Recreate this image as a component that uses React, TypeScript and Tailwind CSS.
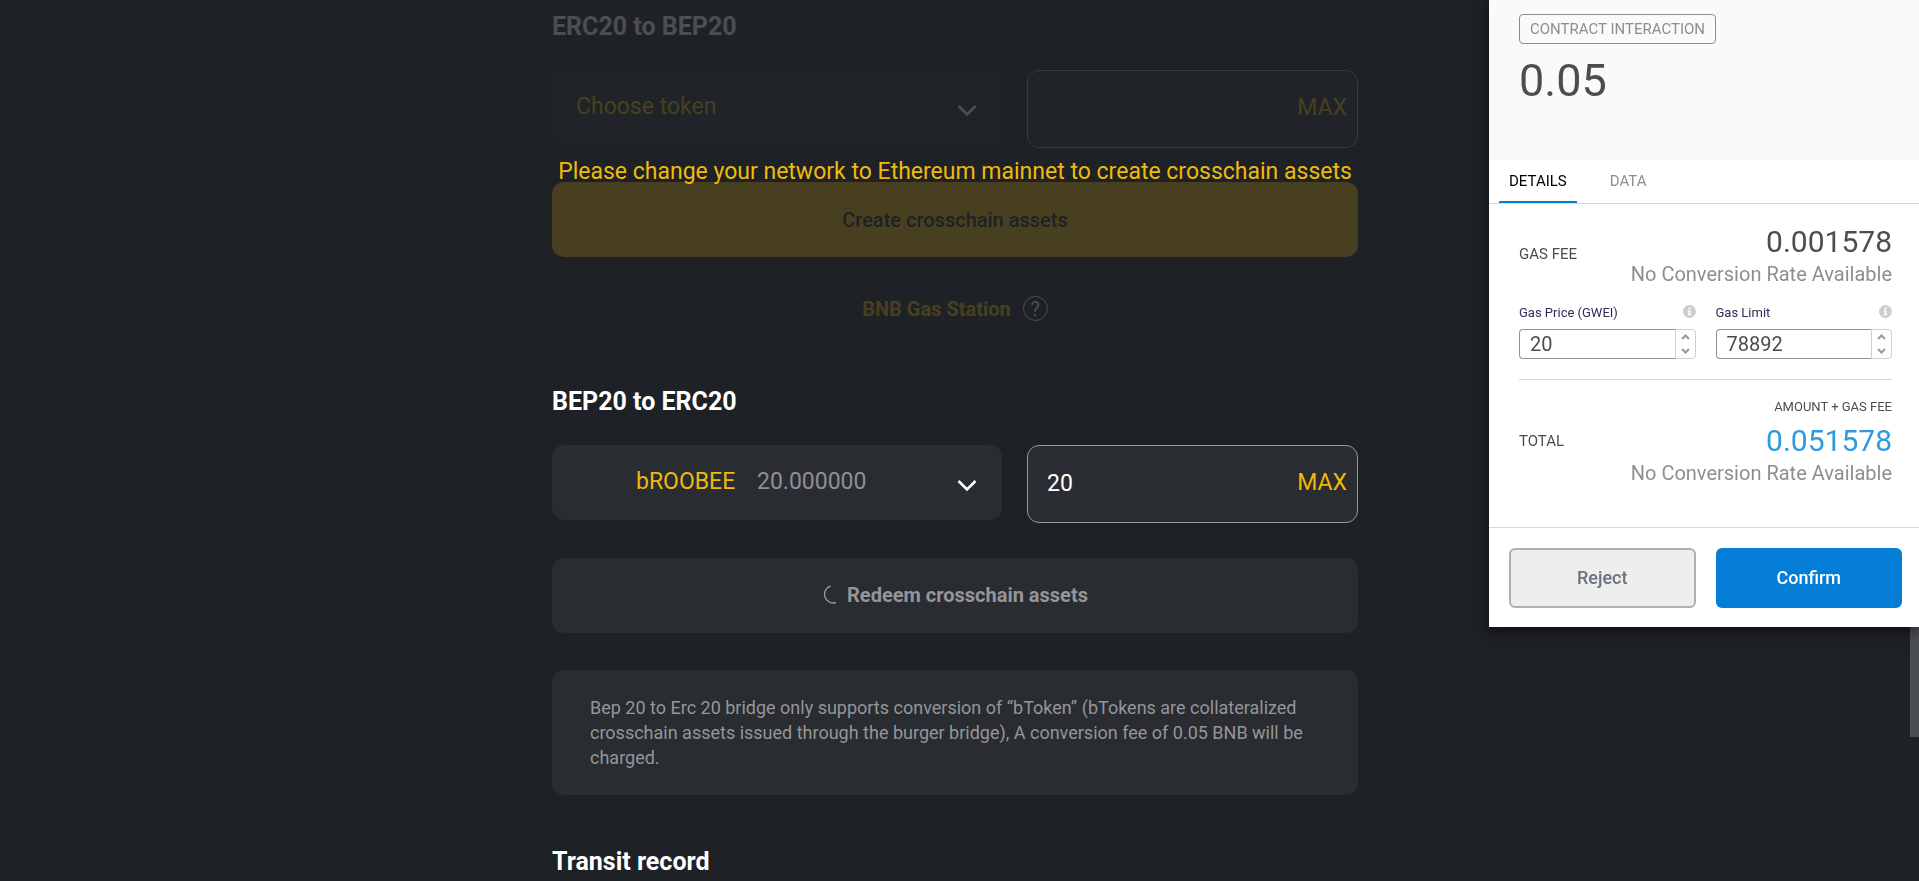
import { useState } from 'react'

interface TokenSelectProps {
  id: string
  label: string
  options: string[]
  balance?: string
}

// the balance and the chevron lie over the select and let clicks through
function TokenSelect({ id, label, options, balance }: TokenSelectProps) {
  return (
    <div className="relative h-[75px] w-[450px] rounded-xl bg-[#292c31] text-[23px] leading-6">
      <select
        id={id}
        aria-label={label}
        className={`h-full w-full cursor-pointer appearance-none bg-transparent pb-0.5 text-[#f0b90b] outline-none ${
          balance ? 'pl-[84px]' : 'pl-6'
        }`}
      >
        {options.map((option) => (
          <option key={option}>{option}</option>
        ))}
      </select>
      {balance && (
        <span className="pointer-events-none absolute inset-y-0 left-[205px] flex items-center pb-0.5 text-[#8e9093]">
          {balance}
        </span>
      )}
      <span className="pointer-events-none absolute inset-y-0 right-[25px] flex items-center pt-1.5">
        <svg width="20" height="13" viewBox="0 0 20 13" fill="none">
          <path d="M1.5 2 L10 10.5 L18.5 2" stroke="white" strokeWidth="2.6" />
        </svg>
      </span>
    </div>
  )
}

interface AmountInputProps {
  id: string
  label: string
  value: string
  onChange: (value: string) => void
  onMax: () => void
}

function AmountInput({ id, label, value, onChange, onMax }: AmountInputProps) {
  return (
    <div className="flex h-[78px] min-w-0 flex-1 items-center rounded-xl border border-[#96999c] bg-[#292c31] pr-2.5 pb-0.5 pl-[19px] text-[23px] leading-6">
      <input
        id={id}
        aria-label={label}
        value={value}
        onChange={(e) => onChange(e.target.value)}
        className="h-full min-w-0 flex-1 bg-transparent text-white outline-none"
      />
      <button onClick={onMax} className="text-[#f0b90b]">MAX</button>
    </div>
  )
}

function InfoIcon() {
  return (
    <svg width="13" height="13" viewBox="0 0 13 13">
      <circle cx="6.5" cy="6.5" r="6.5" fill="#cdcdcd" />
      <path d="M5.5 2.5h2v1.8h-2z M4.8 5.3h2.7v3.8h.8v1.2H4.8V9.1h.8V6.5h-.8z" fill="white" />
    </svg>
  )
}

interface GasFieldProps {
  id: string
  label: string
  value: number
  onChange: (value: number) => void
}

function GasField({ id, label, value, onChange }: GasFieldProps) {
  return (
    <div className="min-w-0">
      <div className="flex h-4 items-start justify-between">
        <label htmlFor={id} className="text-[13px] leading-4 text-[#2b2f55]">{label}</label>
        <InfoIcon />
      </div>
      <div className="mt-2 flex h-[30px]">
        <input
          id={id}
          inputMode="numeric"
          value={value}
          onChange={(e) => onChange(Number(e.target.value) || 0)}
          className="min-w-0 flex-1 rounded-l border border-r-0 border-[#8f9295] bg-white pl-2.5 text-xl leading-6 text-[#4d4d4d] outline-none"
        />
        <div className="flex w-[21px] flex-col rounded-r border border-[#cfcfcf] text-[#9b9b9b]">
          <button aria-label={`Increase ${label}`} onClick={() => onChange(value + 1)} className="flex flex-1 items-center justify-center">
            <svg width="9" height="6" viewBox="0 0 9 6" fill="none">
              <path d="M1 5 L4.5 1.5 L8 5" stroke="currentColor" strokeWidth="2.2" />
            </svg>
          </button>
          <button aria-label={`Decrease ${label}`} onClick={() => onChange(Math.max(0, value - 1))} className="flex flex-1 items-center justify-center">
            <svg width="9" height="6" viewBox="0 0 9 6" fill="none">
              <path d="M1 1 L4.5 4.5 L8 1" stroke="currentColor" strokeWidth="2.2" />
            </svg>
          </button>
        </div>
      </div>
    </div>
  )
}

function WalletPopup() {
  const [tab, setTab] = useState('Details')
  const [gasPrice, setGasPrice] = useState(20)
  const [gasLimit, setGasLimit] = useState(78892)

  return (
    <aside className="fixed top-0 right-0 z-10 w-[430px] bg-white text-[#4d4d4d] shadow-[0_4px_14px_rgba(0,0,0,0.6)]">
      <header className="h-40 bg-[#f9fafa] pt-3.5 pl-[30px]">
        <div className="inline-flex h-[30px] items-center rounded border border-[#8c8e94] px-2.5 text-[15px] leading-5 text-[#8c8e94] uppercase">
          Contract interaction
        </div>
        <div className="mt-[11px] text-[45px] leading-[52px]">0.05</div>
      </header>

      <nav className="flex h-11 gap-[23px] border-b border-[#d2d8dd] pl-2.5">
        {['Details', 'Data'].map((name) => (
          <button
            key={name}
            onClick={() => setTab(name)}
            className={`border-b-2 px-2.5 text-[15px] leading-5 uppercase ${
              tab === name ? 'border-[#037dd6] text-black' : 'border-transparent text-[#8c8e94]'
            }`}
          >
            {name}
          </button>
        ))}
      </nav>

      <div className="pr-[27px] pl-[30px]">
        <div className="flex items-start justify-between pt-5">
          <span className="pt-5 text-[15px] leading-5 uppercase">Gas fee</span>
          <div className="text-right">
            <div className="text-[30px] leading-9">0.001578</div>
            <div className="text-xl leading-7 text-[#8c8e94]">No Conversion Rate Available</div>
          </div>
        </div>

        <div className="mt-[17px] grid grid-cols-2 gap-5">
          <GasField id="gas-price" label="Gas Price (GWEI)" value={gasPrice} onChange={setGasPrice} />
          <GasField id="gas-limit" label="Gas Limit" value={gasLimit} onChange={setGasLimit} />
        </div>

        <div className="mt-5 border-t border-[#d6d9dc] pt-[19px] text-right text-[13px] leading-4 uppercase">
          Amount + gas fee
        </div>
        <div className="mt-2 flex items-start justify-between">
          <span className="text-[15px] leading-9 uppercase">Total</span>
          <div className="text-right">
            <div className="text-[30px] leading-9 text-[#2f9ae0]">0.051578</div>
            <div className="text-xl leading-7 text-[#8c8e94]">No Conversion Rate Available</div>
          </div>
        </div>
      </div>

      <footer className="mt-10 grid grid-cols-2 gap-5 border-t border-[#d6d9dc] pt-5 pr-[17px] pb-[19px] pl-5 text-lg leading-6 font-medium">
        <button className="h-[60px] rounded-md border-2 border-[#b0b0b0] bg-[#eeeeee] text-[#6a737d]">Reject</button>
        <button className="h-[60px] rounded-md bg-[#037dd6] text-white">Confirm</button>
      </footer>
    </aside>
  )
}

export default function App() {
  const [createAmount, setCreateAmount] = useState('')
  const [redeemAmount, setRedeemAmount] = useState('20')

  return (
    <div className="flex h-screen overflow-hidden bg-[#1e2126] font-[Roboto,sans-serif] text-white">
      <main className="min-w-0 flex-1">
        <div className="mx-auto w-full max-w-[806px] pt-[13px]">
          <section>
            <div className="opacity-20">
              <h2 className="text-[25px] leading-7 font-bold">ERC20 to BEP20</h2>
              <div className="mt-[29px] flex items-start gap-[25px]">
                <TokenSelect id="create-token" label="Token to create" options={['Choose token']} />
                <AmountInput
                  id="create-amount"
                  label="Amount to create"
                  value={createAmount}
                  onChange={setCreateAmount}
                  onMax={() => setCreateAmount('0')}
                />
              </div>
            </div>
            <p className="relative z-[1] pt-3 text-center text-[23px] leading-6 text-[#f0b90b]">
              Please change your network to Ethereum mainnet to create crosschain assets
            </p>
            <div className="-mt-0.5 opacity-20">
              <button className="h-[75px] w-full rounded-xl bg-[#f0b90b] text-xl leading-6 font-medium text-[#1e2126]">
                Create crosschain assets
              </button>
              <div className="mt-[39px] flex items-center justify-center gap-3">
                <a href="#gas-station" className="text-xl leading-6 font-bold text-[#f0b90b]">BNB Gas Station</a>
                <button
                  aria-label="About the gas station"
                  className="flex h-[25px] w-[25px] items-center justify-center rounded-full border border-white text-xl leading-6"
                >
                  ?
                </button>
              </div>
            </div>
          </section>

          <section className="mt-[67px]">
            <h2 className="text-[25px] leading-7 font-bold">BEP20 to ERC20</h2>
            <div className="mt-[29px] flex items-start gap-[25px]">
              <TokenSelect id="redeem-token" label="Token to redeem" options={['bROOBEE']} balance="20.000000" />
              <AmountInput
                id="redeem-amount"
                label="Amount to redeem"
                value={redeemAmount}
                onChange={setRedeemAmount}
                onMax={() => setRedeemAmount('20')}
              />
            </div>
            <button className="mt-[35px] flex h-[75px] w-full items-center justify-center gap-2.5 rounded-xl bg-[#292c31] pb-0.5 text-xl leading-6 font-bold text-[#949698]">
              <svg width="15" height="19" viewBox="0 0 15 19" fill="none">
                <path d="M8.5 1 A8.5 8.5 0 0 0 14 17.500" stroke="currentColor" strokeWidth="1.4" />
              </svg>
              Redeem crosschain assets
            </button>
            <p className="mt-[37px] rounded-xl bg-[#292c31] px-[38px] py-[25px] text-lg leading-[25px] text-[#949698]">
              Bep 20 to Erc 20 bridge only supports conversion of “bToken” (bTokens are collateralized crosschain assets
              issued through the burger bridge), A conversion fee of 0.05 BNB will be charged.
            </p>
          </section>

          <h2 className="mt-[53px] text-[25px] leading-7 font-bold">Transit record</h2>
        </div>
      </main>

      {/* page scrollbar */}
      <div className="w-[9px] shrink-0">
        <div className="h-[737px] bg-[#4b4e51]" />
      </div>

      <WalletPopup />
    </div>
  )
}
